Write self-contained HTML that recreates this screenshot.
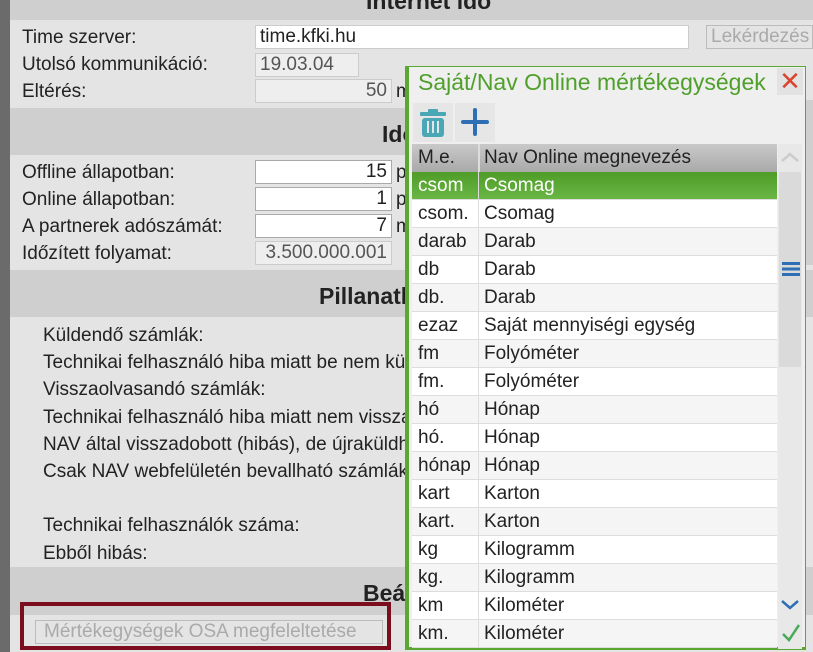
<!DOCTYPE html>
<html><head><meta charset="utf-8"><style>
*{margin:0;padding:0;box-sizing:border-box}
body{width:813px;height:652px;overflow:hidden;background:#e4e4e4;font-family:"Liberation Sans",sans-serif;font-size:19px;color:#222;position:relative}
.a{position:absolute;white-space:nowrap}
.hdr{position:absolute;left:10px;width:803px;background:#cfcfcf;font-weight:bold;font-size:23px;text-align:left;white-space:nowrap;overflow:hidden}
.inp{position:absolute;height:24px;border:1px solid #ccc;background:#eee;color:#555;font-size:19px;padding:0 4px;line-height:22px;text-align:right;white-space:nowrap;overflow:hidden}
.w{background:#fff;border-color:#aaa;color:#222}
.tr{position:absolute;left:412px;width:365px;height:28px;border-bottom:1px solid #ddd;font-size:19px}
.tr span{position:absolute;top:3px}
.tr .c1{left:6px}.tr .c2{left:72px}
</style></head><body>
<div class="a" style="left:0;top:0;width:10px;height:652px;background:#6b6b6b"></div>
<div class="hdr" style="top:0;height:20px;line-height:2px;padding-left:356px">Internet idő</div>
<div class="a" style="left:22px;top:27px">Time szerver:</div>
<div class="a" style="left:22px;top:54px">Utolsó kommunikáció:</div>
<div class="a" style="left:22px;top:81px">Eltérés:</div>
<div class="inp w" style="left:255px;top:25px;width:434px;text-align:left;border-color:#ccc">time.kfki.hu</div>
<div class="inp" style="left:255px;top:53px;width:104px;text-align:left">19.03.04</div>
<div class="inp" style="left:255px;top:79px;width:137px">50</div>
<div class="a" style="left:396px;top:81px">m</div>
<div class="inp" style="left:706px;top:25px;width:107px;text-align:left;color:#aaa;background:#e4e4e4;border-color:#bbb">Lekérdezés</div>
<div class="hdr" style="top:108px;height:47px;line-height:52px;padding-left:372px">Időzítés</div>
<div class="a" style="left:22px;top:162px">Offline állapotban:</div>
<div class="a" style="left:22px;top:189px">Online állapotban:</div>
<div class="a" style="left:22px;top:216px">A partnerek adószámát:</div>
<div class="a" style="left:22px;top:243px">Időzített folyamat:</div>
<div class="inp w" style="left:255px;top:160px;width:137px">15</div>
<div class="inp w" style="left:255px;top:187px;width:137px">1</div>
<div class="inp w" style="left:255px;top:214px;width:137px">7</div>
<div class="inp" style="left:255px;top:241px;width:137px">3.500.000.001</div>
<div class="a" style="left:396px;top:162px">p</div><div class="a" style="left:396px;top:189px">p</div><div class="a" style="left:396px;top:216px">m</div>
<div class="hdr" style="top:270px;height:47px;line-height:52px;padding-left:309px">Pillanatkép</div>
<div class="a" style="left:43px;top:322px;line-height:27.2px">Küldendő számlák:<br>Technikai felhasználó hiba miatt be nem küldött<br>Visszaolvasandó számlák:<br>Technikai felhasználó hiba miatt nem visszaolvasott<br>NAV által visszadobott (hibás), de újraküldhető<br>Csak NAV webfelületén bevallható számlák<br><br>Technikai felhasználók száma:<br>Ebből hibás:</div>
<div class="hdr" style="top:567px;height:48px;line-height:52px;padding-left:353px">Beállítások</div>
<div class="a" style="left:20px;top:602px;width:371px;height:48px;border:4px solid #7b0d1e"></div>
<div class="inp" style="left:35px;top:620px;width:348px;height:24px;text-align:left;color:#aaa;background:#e4e4e4;border-color:#bbb;padding-left:8px">Mértékegységek OSA megfeleltetése</div>
<div class="a" style="left:805px;top:100px;width:8px;height:165px;background:#cfcfcf"></div>
<div class="a" style="left:805px;top:570px;width:8px;height:45px;background:#cfcfcf"></div>
<!-- popup -->
<div class="a" style="left:405px;top:66px;width:401px;height:584px;background:#efefef;border:1px solid #5aa832;border-left:4px solid #5aa832;border-bottom:3px solid #5aa832"></div>
<div class="a" style="left:418px;top:69px;font-size:23px;color:#4fa02a;width:356px;overflow:hidden">Saját/Nav Online mértékegységek</div>
<div class="a" style="left:777px;top:68px;width:26px;height:27px;background:#e2e2e2;color:#d9442f;font-size:26px;line-height:27px;text-align:center">✕</div>
<div class="a" style="left:413px;top:103px;width:40px;height:39px;background:#e6e6e6"></div>
<div class="a" style="left:455px;top:103px;width:40px;height:39px;background:#e6e6e6"></div>
<svg class="a" style="left:418px;top:107px" width="30" height="32" viewBox="0 0 30 32"><rect x="10" y="2" width="10" height="4" rx="1" fill="#4aa7b5"/><rect x="2" y="5" width="26" height="4" rx="1" fill="#4aa7b5"/><rect x="4" y="11" width="22" height="19" rx="3" fill="#4aa7b5"/><rect x="9" y="14" width="2" height="12" fill="#e6e6e6"/><rect x="14" y="14" width="2" height="12" fill="#e6e6e6"/><rect x="19" y="14" width="2" height="12" fill="#e6e6e6"/></svg>
<svg class="a" style="left:460px;top:107px" width="30" height="30" viewBox="0 0 30 30"><rect x="13" y="1" width="4" height="28" rx="2" fill="#2e6eb5"/><rect x="1" y="13" width="28" height="4" rx="2" fill="#2e6eb5"/></svg>
<div class="a" style="left:412px;top:144px;width:365px;height:28px;background:linear-gradient(#c9c9c9,#a9a9a9);font-size:19px"><span class="a" style="left:6px;top:3px">M.e.</span><span class="a" style="left:72px;top:3px">Nav Online megnevezés</span><div class="a" style="left:66px;top:0;width:2px;height:28px;background:#ddd"></div></div>
<div class="a" style="left:778px;top:144px;width:24px;height:505px;background:#e8e8e8"></div>
<div class="a" style="left:779px;top:172px;width:22px;height:195px;background:#dadada"></div>
<svg class="a" style="left:780px;top:150px" width="20" height="14"><path d="M2 11 L10 4 L18 11" stroke="#ccc" stroke-width="2.5" fill="none"/></svg>
<svg class="a" style="left:782px;top:262px" width="18" height="14"><rect x="0" y="0" width="18" height="3" fill="#2e6eb5"/><rect x="0" y="5.5" width="18" height="3" fill="#2e6eb5"/><rect x="0" y="11" width="18" height="3" fill="#2e6eb5"/></svg>
<svg class="a" style="left:780px;top:598px" width="20" height="14"><path d="M2 3 L10 10 L18 3" stroke="#2e6eb5" stroke-width="2.5" fill="none"/></svg>
<svg class="a" style="left:781px;top:623px" width="20" height="20"><path d="M2 11 L8 17 L18 2" stroke="#4aaa5a" stroke-width="2.5" fill="none"/></svg>
<div class="tr" style="top:172px;background:linear-gradient(#4f9c28,#6ab645);color:#fff"><span class="c1">csom</span><span class="c2">Csomag</span></div>
<div class="tr" style="top:200px;background:#fff"><span class="c1">csom.</span><span class="c2">Csomag</span></div>
<div class="tr" style="top:228px;background:#f5f5f5"><span class="c1">darab</span><span class="c2">Darab</span></div>
<div class="tr" style="top:256px;background:#fff"><span class="c1">db</span><span class="c2">Darab</span></div>
<div class="tr" style="top:284px;background:#f5f5f5"><span class="c1">db.</span><span class="c2">Darab</span></div>
<div class="tr" style="top:312px;background:#fff"><span class="c1">ezaz</span><span class="c2">Saját mennyiségi egység</span></div>
<div class="tr" style="top:340px;background:#f5f5f5"><span class="c1">fm</span><span class="c2">Folyóméter</span></div>
<div class="tr" style="top:368px;background:#fff"><span class="c1">fm.</span><span class="c2">Folyóméter</span></div>
<div class="tr" style="top:396px;background:#f5f5f5"><span class="c1">hó</span><span class="c2">Hónap</span></div>
<div class="tr" style="top:424px;background:#fff"><span class="c1">hó.</span><span class="c2">Hónap</span></div>
<div class="tr" style="top:452px;background:#f5f5f5"><span class="c1">hónap</span><span class="c2">Hónap</span></div>
<div class="tr" style="top:480px;background:#fff"><span class="c1">kart</span><span class="c2">Karton</span></div>
<div class="tr" style="top:508px;background:#f5f5f5"><span class="c1">kart.</span><span class="c2">Karton</span></div>
<div class="tr" style="top:536px;background:#fff"><span class="c1">kg</span><span class="c2">Kilogramm</span></div>
<div class="tr" style="top:564px;background:#f5f5f5"><span class="c1">kg.</span><span class="c2">Kilogramm</span></div>
<div class="tr" style="top:592px;background:#fff"><span class="c1">km</span><span class="c2">Kilométer</span></div>
<div class="tr" style="top:620px;background:#f5f5f5;height:28px"><span class="c1">km.</span><span class="c2">Kilométer</span></div>
<div class="a" style="left:478px;top:172px;width:1px;height:476px;background:#ddd"></div>
</body></html>
